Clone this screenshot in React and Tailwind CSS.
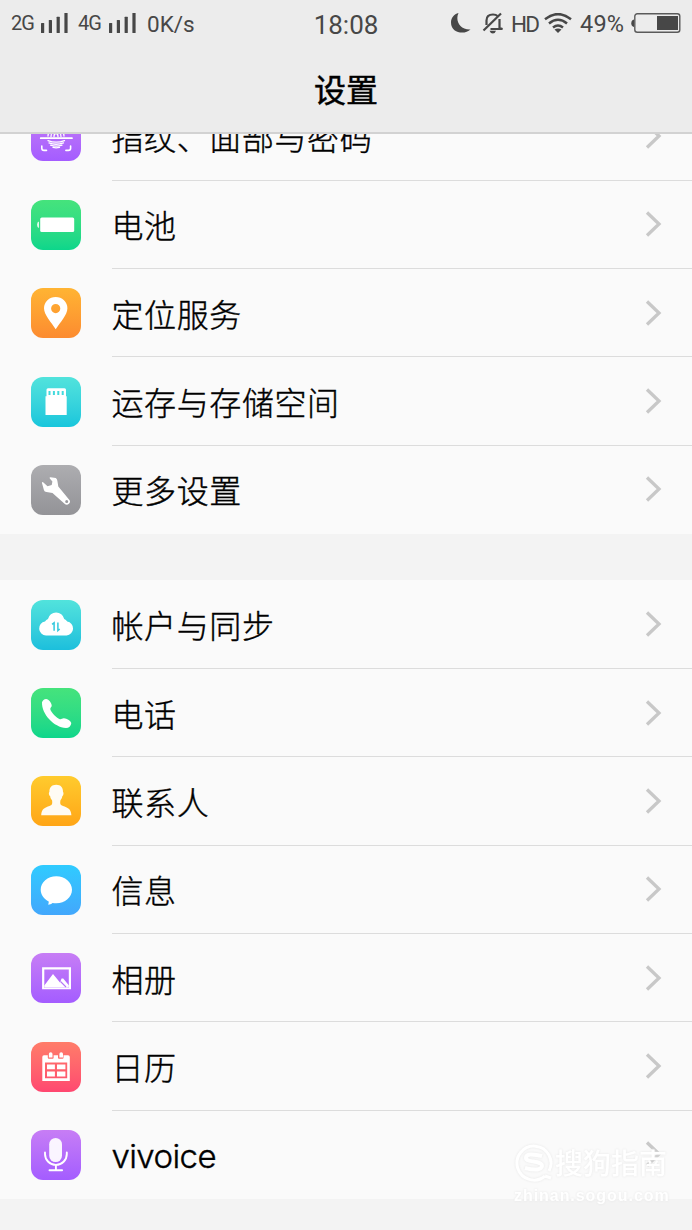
import React from "react";

function Glyph({ name }) {
  switch (name) {
    case "finger":
      return (
        <g fill="none" stroke="#fff" strokeWidth="1.3" strokeLinecap="round">
          <path d="M9.7 27.2H41" strokeWidth="1.7" />
          <path d="M10.8 35v2.2q0 2.2 2.2 2.2h2.5M39.6 35v2.2q0 2.2-2.2 2.2h-2.5M10.8 15v-2.2q0-2.2 2.2-2.2h2.5M39.6 15v-2.2q0-2.2-2.2-2.2h-2.5" strokeWidth="1.6" />
          <path d="M17 25q0-9 8-9t8 9M20 25.5q0-6 5-6t5 6M23 25.5q0-3 2-3t2 3M17 29.6q8 3.2 16.500 0M18 31.900q7 2.700 14.500 0M19.500 34.200q5.500 2 11.500 0M22 36.400q3 .8 6.500 0" />
        </g>
      );
    case "battery":
      return (
        <g fill="#fff">
          <rect x="9.200" y="17.500" width="34" height="14.600" rx="1.600" />
          <path d="M8 21.500v6.600q-2-.6-2-3.300t2-3.300Z" opacity=".85" />
        </g>
      );
    case "pin":
      return (
        <path fill="#fff" fillRule="evenodd" d="M24.700 41.300C20.500 34.600 13 27 13 20.300a11.700 11.300 0 0 1 23.400 0C36.400 27 29 34.600 24.700 41.300ZM24.700 16a4.600 4.600 0 1 0 0 9.200 4.600 4.600 0 0 0 0-9.200Z" />
      );
    case "sd":
      return (
        <path fill="#fff" fillRule="evenodd" d="M17 11.200h16.500q1.500 0 1.500 1.500V19.300h.7V38H14.500V19.300h1v-6.600q0-1.500 1.500-1.500ZM17.500 14v4h2v-4ZM21.900 14v4h2v-4ZM26.300 14v4h2v-4ZM30.700 14v4h2v-4Z" />
      );
    case "wrench":
      return (
        <path fill="#fff" fillRule="evenodd" d="M19.500 12.200L24.800 13.100Q26.200 14 26.400 16L27.300 21.600L38 34.400A3 3 0 0 1 33.600 38.700L21.500 27.900L15.500 27Q13.400 26.700 12.900 24.900L10.900 17.800Q11.200 16.400 12.700 17.700L16.500 21.200L20.700 19.900L21.400 16.600L18.800 13.600Q18.200 12.100 19.500 12.200ZM35.700 34.900a1.500 1.500 0 1 0 0 3 1.500 1.500 0 0 0 0-3Z" />
      );
    case "cloud":
      return (
        <g>
          <path fill="#fff" d="M15 35.400a7 7 0 0 1-1-13.900 6 6 0 0 1 3-2.500 8.300 8.300 0 0 1 16.200 0 6 6 0 0 1 3 2.600 6.950 6.950 0 0 1-.6 13.800Z" />
          <path d="M21.100 24.300l2-1.500v7.900M28.700 29l-1.800 1.600v-8" fill="none" stroke="#33c9dd" strokeWidth="1.500" />
        </g>
      );
    case "phone":
      return (
        <path fill="#fff" d="M11 14.300Q12 11 15.100 10.900C18 11.300 20.300 14.600 20.700 17.300C21 19.100 19 19.700 19.300 21.200C20.400 24.800 25.200 29.600 28.900 31.200C30.400 31.500 31.200 30.200 33 30.300C36 30.600 39.100 32.200 40.300 34.900C40.100 38.100 37.800 39.700 35 40C23 39.500 10.500 26 11 14.300Z" />
      );
    case "person":
      return (
        <path fill="#fff" fillOpacity=".95" d="M25.200 8.800c4.500 0 7 2.800 6.800 7.300.8.300.7 3.500-.6 4-.4 2.200-1.300 3.500-2 4.300-.5 3.400 0 4.500 2.600 5.500 4.500 1.700 8.100 2.500 8.400 9.400H10.200c.3-6.900 3.800-7.700 8.300-9.400 2.600-1 3-2.100 2.600-5.500-.8-.8-1.700-2.100-2-4.300-1.400-.5-1.500-3.700-.7-4-.2-4.500 2.300-7.300 6.800-7.300Z" />
      );
    case "message":
      return (
        <path fill="#fff" d="M25.300 11.200c8.700 0 15.700 6 15.700 13.600s-7 13.500-15.700 13.500c-1.300 0-2.600-.1-3.800-.4-1.100 1-2.800 1.600-4.600 1.700q1.100-1.500.8-3.200C12.900 34.100 9.700 29.700 9.700 24.800c0-7.600 6.900-13.600 15.600-13.600Z" />
      );
    case "album":
      return (
        <g>
          <path fill="#fff" fillRule="evenodd" d="M11.100 14.300h28.900v22H11.100ZM13.300 16.500V35h24.500V16.500Z" />
          <path d="M13.300 34.800V32.500L22 21l7 8.500 1.600-4 1.600.1 5.600 6.600v2.600Z" fill="#fff" />
          <path d="M29.500 28.500l5.500 5.500" stroke="#b575f7" strokeWidth="1.100" />
        </g>
      );
    case "calendar":
      return (
        <g>
          <path fill="#fff" fillRule="evenodd" d="M13 13.300h3.800v2.500q0 1 1 1h3.800q1 0 1-1v-2.500h4.400v2.500q0 1 1 1h3.500q1 0 1-1v-2.500H37q1.800 0 1.800 1.800V39H11.300V15.100q0-1.800 1.700-1.800ZM14 20.500v15.800h22.200V20.500Z" />
          <path fill="#fff" d="M17.900 12q0-1.700 1.800-1.700t1.800 1.700v3.600h-3.600ZM28.400 12q0-1.700 1.800-1.700t1.800 1.700v3.600h-3.600ZM16 22.600h7.900v4.700H16ZM26 22.600h8.400v4.700H26ZM16 29.600h7.900v4.900H16ZM26 29.600h8.400v4.900H26Z" />
        </g>
      );
    case "mic":
      return (
        <g>
          <rect x="18.200" y="7.900" width="12.800" height="24.200" rx="6.400" fill="#fff" fillOpacity=".93" />
          <path d="M14 22.500v1.500a10.900 10.900 0 0 0 21.800 0v-1.500M24.900 35v4.500M18.500 40.200h12.600" fill="none" stroke="#fff" strokeWidth="1.900" strokeLinecap="round" />
        </g>
      );
    default:
      return null;
  }
}

function Row({ icon, label, tint, last, text = "" }) {
  return (
    <div className="flex h-[88.4px] shrink-0 items-stretch pl-[31px]">
      <div className="flex w-[80.500px] shrink-0 items-center">
        <div className={"h-[50px] w-[50px] rounded-[12px] bg-linear-to-b " + tint}>
          <svg viewBox="0 0 50 50" className="h-full w-full">
            <Glyph name={icon} />
          </svg>
        </div>
      </div>
      <div className={"flex flex-1 items-center justify-between border-b pr-[30px] " + (last ? "border-transparent" : "border-[#dcdcdc]")}>
        <span className={"whitespace-nowrap " + text}>{label}</span>
        <svg viewBox="0 0 17 26" className="h-[26px] w-[17px]">
          <path d="M2 1.500L14 13L2 24.500" fill="none" stroke="#c8c8c8" strokeWidth="3.300" />
        </svg>
      </div>
    </div>
  );
}

function Signal() {
  return (
    <svg viewBox="0 0 28 20" className="h-5 w-7" fill="#474747">
      <rect x="0" y="10" width="3.200" height="10" rx=".5" />
      <rect x="7.800" y="7" width="3.200" height="13" rx=".5" />
      <rect x="15.600" y="3.700" width="3.200" height="16.300" rx=".5" />
      <rect x="23.400" y="0" width="3.200" height="20" rx=".5" />
    </svg>
  );
}

function StatusBar() {
  return (
    <div className="grid h-[46px] grid-cols-[1fr_auto_1fr] items-center pr-[11px] pl-[11px] font-[Roboto,sans-serif] text-[#474747]">
      <div className="flex items-center">
        <span className="w-[30px] text-[20px] tracking-[-1px]">2G</span>
        <Signal />
        <span className="ml-[9px] w-[31px] text-[20px] tracking-[-1px]">4G</span>
        <Signal />
        <span className="ml-[10px] pt-[3px] text-[22.500px]">0K/s</span>
      </div>
      <span className="pt-[4px] text-[26px]">18:08</span>
      <div className="flex items-center justify-end">
        <svg viewBox="0 0 20 20" className="mr-[11px] h-5 w-5">
          <path d="M7.500 0C4 7 8.500 17 19.500 16.500C14 22 0 20.500 0 9.500C0 5 3 1 7.500 0Z" fill="#474747" />
        </svg>
        <svg viewBox="0 0 22 22" className="mr-[7px] h-[22px] w-[22px]" fill="none" stroke="#474747" strokeWidth="2.200">
          <path d="M4.500 13V8.500Q4.500 2.500 11 2.500Q14 2.500 15.500 4M17.500 7V16L20.500 17H8.500" />
          <path d="M1.500 18.500L19 1.500" />
          <path d="M7.500 18.800h6.500q-.8 2.700-3.200 2.700t-3.300-2.700Z" fill="#474747" stroke="none" />
        </svg>
        <span className="mr-[5px] w-[28px] pt-[3px] text-[22.500px] tracking-[-1.700px]">HD</span>
        <svg viewBox="0 0 28 20" className="mr-[8px] h-5 w-7" fill="none" stroke="#474747" strokeWidth="2.500">
          <path d="M1 6.200Q14-4 27 6.200M5 10.500Q14 3 23 10.500M9 14.500Q14 10.500 19 14.500" />
          <path d="M10.500 16.500Q14 14.300 17.500 16.500L14 20Z" fill="#474747" stroke="none" />
        </svg>
        <span className="w-[51px] pt-[4px] text-[23.500px] tracking-[0.200px]">49%</span>
        <svg viewBox="0 0 50 20" className="h-5 w-[50px]">
          <rect x="3.800" y=".8" width="45" height="18.400" rx="2.500" fill="none" stroke="#5a5a5a" strokeWidth="1.400" />
          <path d="M3 6.500v7.500q-2.700-.5-2.700-3.700T3 6.500Z" fill="#474747" />
          <rect x="26" y="3" width="21" height="14" fill="#474747" />
        </svg>
      </div>
    </div>
  );
}

export default function App() {
  return (
    <div className="relative flex h-[1230px] w-[692px] flex-col overflow-hidden bg-[#f3f3f3] font-['Noto_Sans_CJK_SC',sans-serif]">
      <header className="z-10 h-[134px] shrink-0 border-b-2 border-[#d2d2d2] bg-[#ececec]">
        <StatusBar />
        <h1 className="pt-[18px] text-center text-[32px] leading-[48px] font-normal text-black [-webkit-text-stroke:0.5px_#000]">设置</h1>
      </header>
      <main className="-mt-[41.800px] flex flex-col text-[32px] leading-[48px] font-light tracking-[0.600px] text-black [-webkit-text-stroke:0.4px_#000]">
        <section className="bg-[#fafafa]">
          <Row icon="finger" label="指纹、面部与密码" tint="from-[#c77df5] to-[#a45cff]" />
          <Row icon="battery" label="电池" tint="from-[#45e37c] to-[#0bd68b]" />
          <Row icon="pin" label="定位服务" tint="from-[#ffb433] to-[#fc8b30]" />
          <Row icon="sd" label="运存与存储空间" tint="from-[#51e3dc] to-[#16c6dc]" />
          <Row icon="wrench" label="更多设置" tint="from-[#adadb0] to-[#939397]" last />
        </section>
        <section className="mt-[46.300px] bg-[#fafafa]">
          <Row icon="cloud" label="帐户与同步" tint="from-[#51e3dc] to-[#1bbfdc]" />
          <Row icon="phone" label="电话" tint="from-[#45e37c] to-[#0bd68b]" />
          <Row icon="person" label="联系人" tint="from-[#ffcb2d] to-[#ffa516]" />
          <Row icon="message" label="信息" tint="from-[#2fcbff] to-[#42a7fc]" />
          <Row icon="album" label="相册" tint="from-[#c77df5] to-[#a45cff]" />
          <Row icon="calendar" label="日历" tint="from-[#ff7c69] to-[#ff4770]" />
          <Row icon="mic" label="vivoice" tint="from-[#c77df5] to-[#a45cff]" last text="pt-[4px] font-[Inter,sans-serif] text-[33px] tracking-[-0.600px]" />
        </section>
      </main>
      <div className="absolute top-[1142px] left-[514px] w-[166px] text-white [filter:drop-shadow(0_0_1px_#e6e6e6)]">
        <div className="flex items-center">
          <svg viewBox="0 0 40 40" className="h-10 w-10" fill="none" stroke="#fff">
            <path d="M31 34A17 17 0 1 1 35 29M31 34L37 36" strokeWidth="3" />
            <path d="M28 14Q12 10 12 16C12 21 28 18 28 24Q27 30 11 26" strokeWidth="4" />
          </svg>
          <span className="ml-[1px] text-[28px] leading-[40px] font-medium">搜狗指南</span>
        </div>
        <div className="mt-[4px] font-['Liberation_Sans',sans-serif] text-[16px] leading-[20px] font-bold tracking-[0.950px] whitespace-nowrap">zhinan.sogou.com</div>
      </div>
    </div>
  );
}
